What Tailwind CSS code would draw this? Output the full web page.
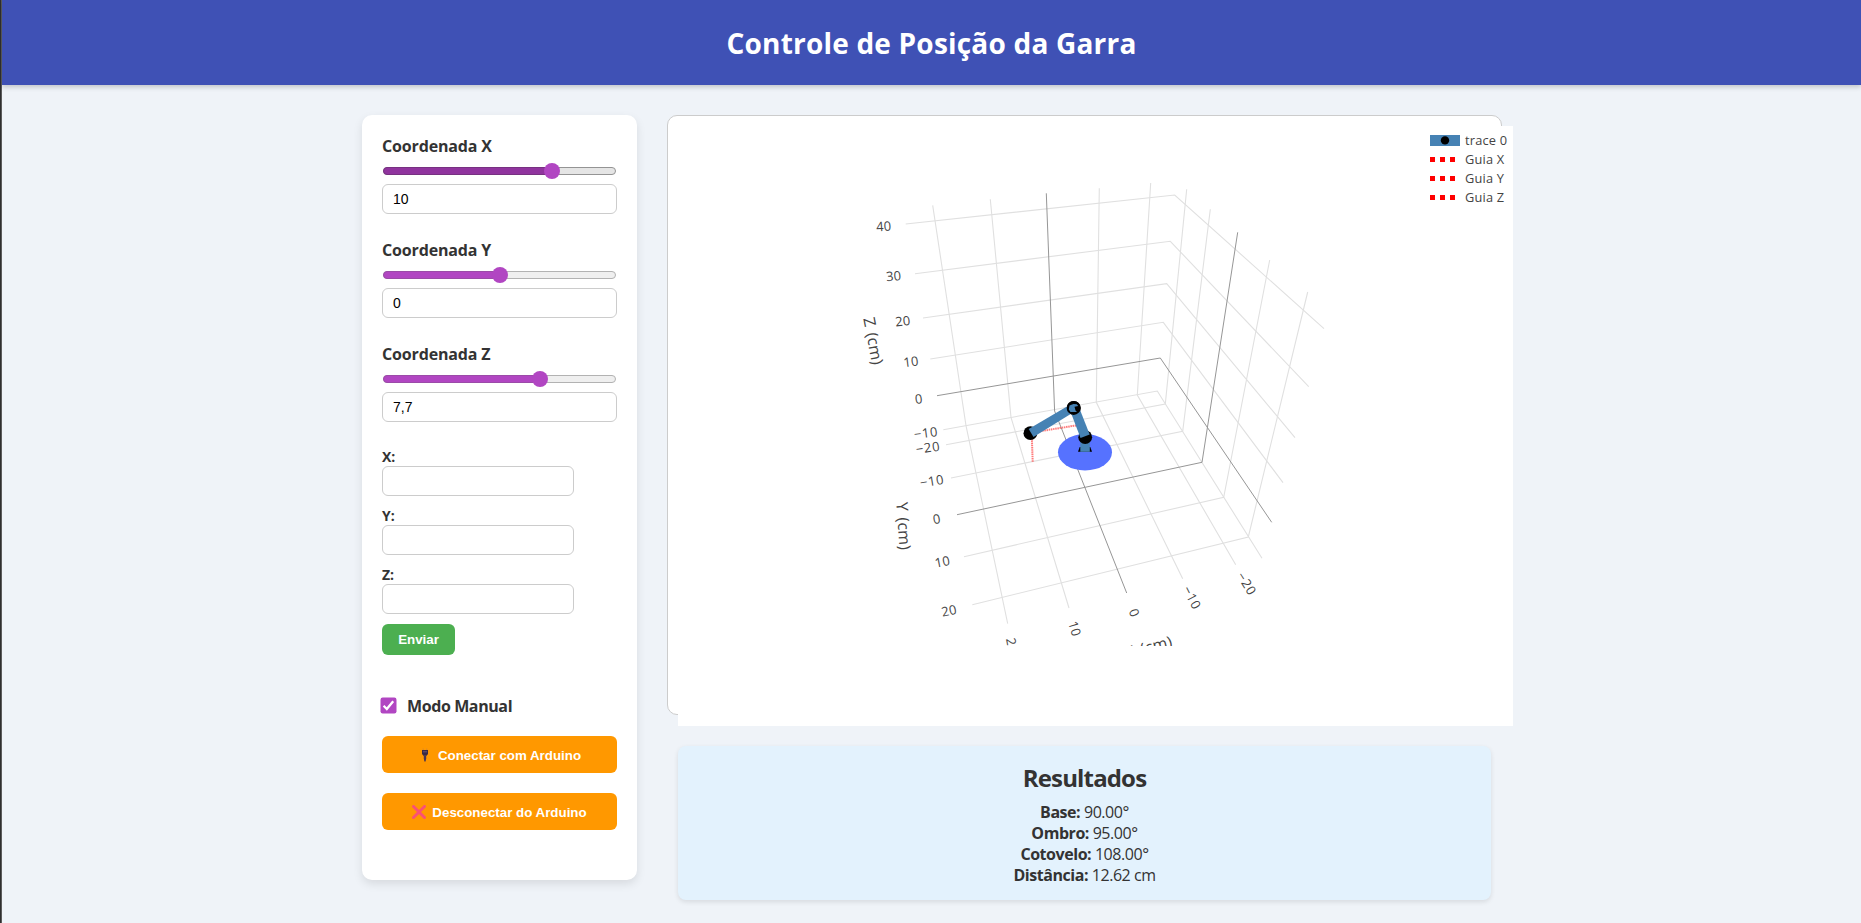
<!DOCTYPE html>
<html lang="pt-BR">
<head>
<meta charset="utf-8">
<title>Controle de Posição da Garra</title>
<script src="https://cdn.jsdelivr.net/npm/@tailwindcss/browser@4"></script>
</head>
<body class="h-screen overflow-hidden bg-[#eff3f8] text-[#333] font-['Open_Sans','Noto_Sans',sans-serif] flex">
<div class="w-px shrink-0 bg-[#2f2f2f]"></div>
<div class="w-px shrink-0 bg-[#5c5c5c]"></div>
<div class="flex-1 flex flex-col min-w-0">
  <header class="h-[85px] shrink-0 bg-[#3f51b5] shadow-[0_2px_5px_rgba(0,0,0,0.2)] flex items-center justify-center">
    <h1 class="text-white text-[28px] font-bold leading-none tracking-[0.2px]">Controle de Posição da Garra</h1>
  </header>
  <main class="flex justify-center gap-[30px] pt-[30px] pl-px">
    <section class="w-[275px] h-[765px] shrink-0 bg-white rounded-[10px] p-5 shadow-[0_4px_10px_rgba(0,0,0,0.1)] flex flex-col">
      <div class="mb-[25px]">
        <label class="block text-base font-bold leading-[22px] tracking-[-0.15px]">Coordenada X</label>
        <div class="relative mt-[6px] h-4 px-px flex items-center">
          <div class="w-full h-2 rounded-full border border-[#949494] bg-[#e5e5e5]"></div>
          <div class="absolute left-px top-1 w-[168px] h-2 rounded-l-full border border-[#773181] bg-[#90349e]"></div>
          <div class="absolute left-[162px] top-0 size-4 rounded-full bg-[#b146c2]"></div>
        </div>
        <div class="mt-[5px] h-[30px] border border-[#ccc] rounded-[6px] px-[10px] flex items-center text-black text-sm leading-4 font-['Liberation_Sans',sans-serif]">10</div>
      </div>
      <div class="mb-[25px]">
        <label class="block text-base font-bold leading-[22px] tracking-[-0.15px]">Coordenada Y</label>
        <div class="relative mt-[6px] h-4 px-px flex items-center">
          <div class="w-full h-2 rounded-full border border-[#b2b2b2] bg-[#efefef]"></div>
          <div class="absolute left-px top-1 w-[116px] h-2 rounded-l-full border border-[#9b4ba8] bg-[#b146c2]"></div>
          <div class="absolute left-[110px] top-0 size-4 rounded-full bg-[#b146c2]"></div>
        </div>
        <div class="mt-[5px] h-[30px] border border-[#ccc] rounded-[6px] px-[10px] flex items-center text-black text-sm leading-4 font-['Liberation_Sans',sans-serif]">0</div>
      </div>
      <div class="mb-[25px]">
        <label class="block text-base font-bold leading-[22px] tracking-[-0.15px]">Coordenada Z</label>
        <div class="relative mt-[6px] h-4 px-px flex items-center">
          <div class="w-full h-2 rounded-full border border-[#b2b2b2] bg-[#efefef]"></div>
          <div class="absolute left-px top-1 w-[156px] h-2 rounded-l-full border border-[#9b4ba8] bg-[#b146c2]"></div>
          <div class="absolute left-[150px] top-0 size-4 rounded-full bg-[#b146c2]"></div>
        </div>
        <div class="mt-[5px] h-[30px] border border-[#ccc] rounded-[6px] px-[10px] flex items-center text-black text-sm leading-4 font-['Liberation_Sans',sans-serif]">7,7</div>
      </div>
      <div class="flex flex-col gap-[10px] items-start">
        <div>
          <label class="block text-sm font-bold leading-[19px]">X:</label>
          <div class="w-48 h-[30px] border border-[#ccc] rounded-[6px]"></div>
        </div>
        <div>
          <label class="block text-sm font-bold leading-[19px]">Y:</label>
          <div class="w-48 h-[30px] border border-[#ccc] rounded-[6px]"></div>
        </div>
        <div>
          <label class="block text-sm font-bold leading-[19px]">Z:</label>
          <div class="w-48 h-[30px] border border-[#ccc] rounded-[6px]"></div>
        </div>
        <button class="w-[73px] h-[31px] rounded-[6px] bg-[#4caf50] text-white font-bold text-[13.33px] font-['Liberation_Sans',sans-serif]">Enviar</button>
      </div>
      <div class="mt-[38px] h-6 flex items-center -ml-[2px]">
        <svg class="w-[17px] h-[17px]" viewBox="0 0 17 17"><rect x=".5" y=".5" width="16" height="16" rx="2.2" fill="#b146c2"/><path d="M3.6 8.8 6.8 12 13.2 4.2" fill="none" stroke="#fff" stroke-width="2.3"/></svg>
        <span class="ml-[10px] text-base font-bold leading-6 tracking-[-0.4px] relative top-px">Modo Manual</span>
      </div>
      <button class="mt-[19px] h-[37px] shrink-0 rounded-[6px] bg-[#ff9800] text-white font-bold text-[13.33px] font-['Liberation_Sans',sans-serif] flex items-center justify-center">
        <svg class="w-[14px] h-[14px] mr-[6px]" viewBox="0 0 14 14"><path d="M5.2.5v2M8.8.5v2" stroke="#d98a2b" stroke-width="1"/><path d="M4 2h6v4L8.6 7.8H5.4L4 6Z" fill="#3a2a45"/><path d="M5 3.8h4" stroke="#6a5578" stroke-width="1"/><path d="M5.8 7.5h2.4v3L7.6 13.5H6.4L5.8 10.500Z" fill="#4a3550"/></svg>
        <span class="relative top-px">Conectar com Arduino</span>
      </button>
      <button class="mt-5 h-[37px] shrink-0 rounded-[6px] bg-[#ff9800] text-white font-bold text-[13.33px] font-['Liberation_Sans',sans-serif] flex items-center justify-center">
        <svg class="w-[14px] h-[14px] mr-[6px]" viewBox="0 0 14 14"><path d="M1.500 1.500 12.500 12.500M12.500 1.500 1.500 12.500" stroke="#fa5075" stroke-width="2.900" stroke-linecap="square" fill="none"/></svg>
        <span class="relative top-px">Desconectar do Arduino</span>
      </button>
    </section>

    <section class="w-[835px] shrink-0">
      <div class="w-[835px] h-[600px] bg-white border border-[#ccc] rounded-[10px] pt-[10px] pl-[10px]">
        <svg class="block w-[835px] h-[600px] max-w-none bg-white" viewBox="678 126 835 600" font-family="Open Sans, Noto Sans, sans-serif" fill="#444">
          <defs><clipPath id="scene"><rect x="678" y="126" width="835" height="520"/></clipPath></defs>
          <g fill="none" stroke="#e0e0e0" stroke-width="1.1">
            <path d="M905.7 224 1174.700 195 1324 328.700M915 273.700 1170.300 241.300 1308.700 386.700M923 318 1166.700 283.700 1295 437.700M930.300 359 1163.300 322.300 1283 482.700M943.300 429.700 1157.300 391 1262 558.300"/>
            <path d="M932.700 205.300 966 425.700 1007.700 623.700M990.300 199.300 1011 417.300 1069 608M1099.300 188.300 1096.300 402.300 1182.700 578.700M1150.700 183 1137.300 395 1235.700 564.700"/>
            <path d="M1186.700 189.300 1165.300 404 946 444.700M1210.300 209.300 1182.700 431.300 951 478M1269.700 260 1223.700 497.300 964 556.700M1307.700 292 1248.300 537 972.300 604.700"/>
          </g>
          <path d="M937 395.700 1160.300 358 1271.700 522.300M1046.300 193.300 1054.600 411 1126.700 593M1237.700 232.300 1202 462.300 957 514.700" fill="none" stroke="#969696" stroke-width="1"/>

          <ellipse cx="1085" cy="452.300" rx="27" ry="18.200" fill="#5672ff"/>
          <g stroke="#ff4d4d" stroke-opacity=".75" stroke-width="2" stroke-dasharray="1.500 .7">
            <path d="M1040 431.200 1085 424M1031.800 436 1032.700 462"/>
          </g>
          <path d="M1078 451.800 1079.700 447H1090.300L1092 451.800Z" fill="#000"/>
          <rect x="1080.300" y="440" width="9.500" height="11.800" fill="#4682b4"/>
          <g fill="#000">
            <circle cx="1085.200" cy="437.200" r="6.900"/>
            <circle cx="1030.400" cy="433.200" r="6.900"/>
            <circle cx="1073.700" cy="407.900" r="7"/>
          </g>
          <path d="M1069.500 409 1078.500 406 1089.700 434.500 1080.500 438Z" fill="#4682b4"/>
          <path d="M1028.700 429 1069.500 405 1074.700 411.500 1033.500 437Z" fill="#4682b4"/>
          <circle cx="1073.700" cy="407.900" r="5.800" fill="#000" stroke="#000" stroke-width="2.400"/>
          <path d="M1069.500 405.500 1073.500 404 1076.800 404.300 1078.200 406 1074.500 406.800 1075.500 410.500 1077 412 1070.500 412 1068.800 409.500Z" fill="#4682b4"/>

          <g font-size="13" text-anchor="middle" letter-spacing=".15">
            <text transform="translate(883.700 226.300) rotate(-4)" dy=".36em">40</text>
            <text transform="translate(893.700 276) rotate(-5)" dy=".36em">30</text>
            <text transform="translate(902.700 321) rotate(-6)" dy=".36em">20</text>
            <text transform="translate(911 361.700) rotate(-7)" dy=".36em">10</text>
            <text transform="translate(918.700 399) rotate(-7)" dy=".36em">0</text>
            <text transform="translate(926 432.800) rotate(-7)" dy=".36em" letter-spacing=".7">−10</text>
            <text transform="translate(928 447.600) rotate(-8)" dy=".36em" letter-spacing=".7">−20</text>
            <text transform="translate(932 481) rotate(-9)" dy=".36em" letter-spacing=".7">−10</text>
            <text transform="translate(936.700 519) rotate(-10)" dy=".36em">0</text>
            <text transform="translate(942.300 561.700) rotate(-11)" dy=".36em">10</text>
            <text transform="translate(949 610.700) rotate(-12)" dy=".36em">20</text>
            <text transform="translate(1074.700 628.700) rotate(73)" dy=".36em">10</text>
            <text transform="translate(1134.300 612.700) rotate(68)" dy=".36em">0</text>
            <text transform="translate(1192 597.800) rotate(63)" dy=".36em" letter-spacing=".7">−10</text>
            <text transform="translate(1246.800 583.700) rotate(58)" dy=".36em" letter-spacing=".7">−20</text>
            <g clip-path="url(#scene)">
              <text transform="translate(1012 645.500) rotate(80)" dy=".36em">20</text>
              <text font-size="16" word-spacing="2" transform="translate(1148.500 647) rotate(-14)" dy=".36em">X (cm)</text>
            </g>
            <text font-size="16" word-spacing="2" transform="translate(873 341) rotate(79)" dy=".33em">Z (cm)</text>
            <text font-size="16" word-spacing="2" transform="translate(903.300 526) rotate(86)" dy=".33em">Y (cm)</text>
          </g>

          <rect x="1430" y="135" width="30" height="11" fill="#4682b4"/>
          <circle cx="1445" cy="140.400" r="4.200" fill="#000"/>
          <path d="M1430 159.500h30M1430 178.500h30M1430 197.500h30" stroke="red" stroke-width="5" stroke-dasharray="5 5"/>
          <g font-size="12.800" letter-spacing=".2">
            <text x="1465" y="145">trace 0</text>
            <text x="1465" y="164">Guia X</text>
            <text x="1465" y="183">Guia Y</text>
            <text x="1465" y="202">Guia Z</text>
          </g>
        </svg>
      </div>
      <div class="mt-[31px] ml-[11px] w-[813px] h-[154px] rounded-[8px] bg-[#e3f2fd] shadow-[0_2px_5px_rgba(0,0,0,0.1)] flex flex-col items-center text-base leading-[21px] tracking-[-0.45px]">
        <h2 class="mt-[16px] mb-[8px] text-2xl leading-8 font-bold tracking-[-0.85px]">Resultados</h2>
        <p><b>Base:</b> 90.00°</p>
        <p><b>Ombro:</b> 95.00°</p>
        <p><b>Cotovelo:</b> 108.00°</p>
        <p><b>Distância:</b> 12.62 cm</p>
      </div>
    </section>
  </main>
</div>
</body>
</html>
